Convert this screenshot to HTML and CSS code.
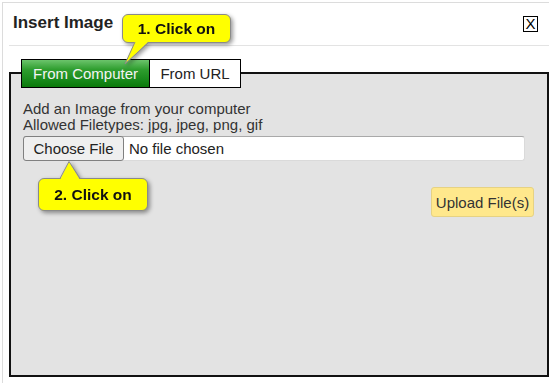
FILE: index.html
```html
<!DOCTYPE html>
<html lang="en">
<head>
    <meta charset="UTF-8">
    <meta name="viewport" content="width=device-width, initial-scale=1.0">
    <title>Insert Image</title>
    <link rel="stylesheet" href="styles.css">
</head>
<body>
    <div class="dialog">
        <div class="dialog-header">
            <h1 class="dialog-title">Insert Image</h1>
            <button class="close-btn">X</button>
        </div>
        <div class="tabs">
            <div class="tab tab-active">From Computer</div>
            <div class="tab tab-url">From URL</div>
        </div>
        <div class="tab-panel">
            <p class="hint">Add an Image from your computer<br>Allowed Filetypes: jpg, jpeg, png, gif</p>
            <div class="file-input">
                <span class="file-btn">Choose File</span>
                <span class="file-name">No file chosen</span>
            </div>
            <div class="upload-row">
                <button class="upload-btn">Upload File(s)</button>
            </div>
        </div>

        <div class="callout callout-1">
            1. Click on
            <svg class="tail tail-down" width="30" height="26" viewBox="0 0 30 26">
                <polygon points="12,0 26,0 2,23" fill="#ffff00"/>
                <polyline points="12,1 2,23 26,1" fill="none" stroke="#8a8a8a" stroke-width="1"/>
            </svg>
        </div>
        <div class="callout callout-2">
            2. Click on
            <svg class="tail tail-up" width="24" height="20" viewBox="0 0 24 20">
                <polygon points="1,19 10,0.5 21,19" fill="#ffff00"/>
                <polyline points="1,17.5 10,0.5 21,17.5" fill="none" stroke="#8a8a8a" stroke-width="1"/>
            </svg>
        </div>
    </div>
</body>
</html>
```

FILE: styles.css
```css
body {
    margin: 0;
    background-color: #fff;
    font-family: "Liberation Sans", Arial, sans-serif;
    color: #333;
}
.dialog {
    position: relative;
    width: 547px;
    height: 381px;
    box-sizing: border-box;
    margin: 2px 0 0 2px;
    padding-left: 6px;
    border-top: 1px solid #dcdcdc;
    border-left: 1px solid #dcdcdc;
}
.dialog-header {
    display: flex;
    justify-content: space-between;
    align-items: flex-start;
    height: 42px;
    padding: 0 11px 0 4px;
    border-bottom: 1px solid #e3e3e3;
}
.dialog-title {
    margin: 0;
    padding-top: 10px;
    font-size: 17px;
    line-height: 20px;
    font-weight: bold;
    color: #222;
}
.close-btn {
    width: 15px;
    height: 16px;
    margin-top: 13px;
    padding: 0;
    border: 1px solid #000;
    border-radius: 0;
    background-color: #fff;
    font-family: "Liberation Sans", Arial, sans-serif;
    font-size: 15px;
    line-height: 14px;
    color: #000;
}
.tabs {
    position: relative;
    z-index: 1;
    display: flex;
    margin: 13px 0 -16px 0;
    padding-left: 12px;
}
.tab {
    display: flex;
    justify-content: center;
    align-items: center;
    height: 29px;
    box-sizing: border-box;
    border: 1px solid #000;
    background-color: #fff;
    font-size: 15px;
    color: #222;
}
.tab-active {
    width: 129px;
    background: linear-gradient(#6cc46c, #2f9e2f 35%, #17891a 75%, #0b7a0b);
    color: #f4f4f4;
}
.tab-url {
    width: 92px;
    margin-left: -1px;
}
.tab-panel {
    height: 305px;
    box-sizing: border-box;
    padding: 27px 13px 0 12px;
    border: 2px solid #111;
    background-color: #e3e3e3;
}
.hint {
    margin: 0;
    font-size: 15px;
    line-height: 16px;
    color: #333;
}
.file-input {
    display: flex;
    align-items: center;
    width: 502px;
    height: 25px;
    box-sizing: border-box;
    margin-top: 3px;
    border: 1px solid #dadada;
    border-top-color: #a9a9a9;
    border-radius: 3px;
    background-color: #fff;
    font-size: 15px;
    color: #222;
}
.file-btn {
    display: flex;
    justify-content: center;
    align-items: center;
    width: 101px;
    height: 25px;
    box-sizing: border-box;
    margin: -1px 0 -1px -1px;
    border: 1px solid #808080;
    border-radius: 3px;
    background-color: #efefef;
}
.file-name {
    margin-left: 5px;
}
.upload-row {
    display: flex;
    justify-content: flex-end;
    margin-top: 26px;
}
.upload-btn {
    width: 103px;
    height: 30px;
    padding: 0;
    border: 1px solid #e6d283;
    border-radius: 3px;
    background-color: #ffe88c;
    font-family: "Liberation Sans", Arial, sans-serif;
    font-size: 15px;
    color: #333;
}
.callout {
    position: absolute;
    z-index: 2;
    display: flex;
    justify-content: center;
    align-items: center;
    box-sizing: border-box;
    border: 1px solid #8a8a8a;
    border-radius: 6px;
    background-color: #ffff00;
    font-size: 15.5px;
    font-weight: bold;
    color: #111;
    filter: drop-shadow(2px 2px 2px rgba(0, 0, 0, 0.4));
}
.callout-1 {
    left: 119px;
    top: 11px;
    width: 109px;
    height: 29px;
}
.callout-2 {
    left: 35px;
    top: 175px;
    width: 110px;
    height: 33px;
}
.tail {
    position: absolute;
    overflow: visible;
}
.tail-down {
    left: 0;
    top: 26px;
}
.tail-up {
    left: 20px;
    top: -18px;
}
```
